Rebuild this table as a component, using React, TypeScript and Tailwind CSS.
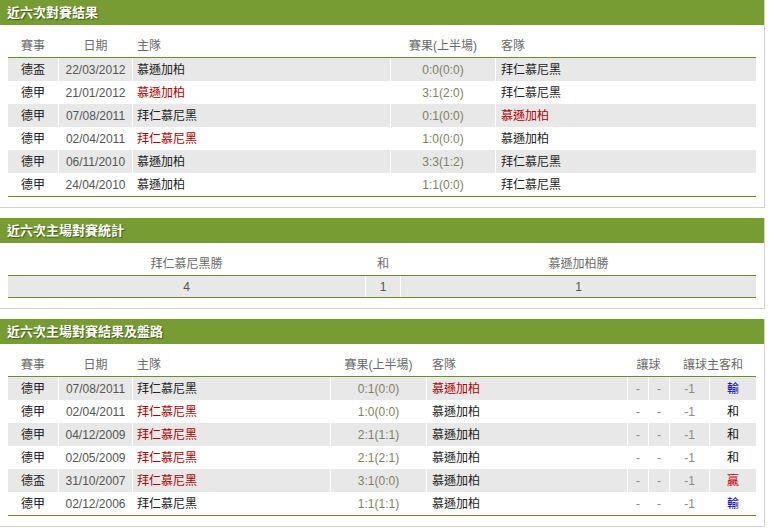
// 對賽往績 — 近六次對賽 / 主場統計 / 主場結果及盤路

const FONT = { fontFamily: '"Liberation Sans", Arial, "Noto Sans CJK TC", sans-serif' };

type Match = { league: string; date: string; home: string; homeRed?: boolean; score: string; away: string; awayRed?: boolean };

const recent: Match[] = [
  { league: "德盃", date: "22/03/2012", home: "慕遜加柏", score: "0:0(0:0)", away: "拜仁慕尼黑" },
  { league: "德甲", date: "21/01/2012", home: "慕遜加柏", homeRed: true, score: "3:1(2:0)", away: "拜仁慕尼黑" },
  { league: "德甲", date: "07/08/2011", home: "拜仁慕尼黑", score: "0:1(0:0)", away: "慕遜加柏", awayRed: true },
  { league: "德甲", date: "02/04/2011", home: "拜仁慕尼黑", homeRed: true, score: "1:0(0:0)", away: "慕遜加柏" },
  { league: "德甲", date: "06/11/2010", home: "慕遜加柏", score: "3:3(1:2)", away: "拜仁慕尼黑" },
  { league: "德甲", date: "24/04/2010", home: "慕遜加柏", score: "1:1(0:0)", away: "拜仁慕尼黑" },
];

type HomeMatch = Match & { result: "輸" | "和" | "贏" };

const homeRecent: HomeMatch[] = [
  { league: "德甲", date: "07/08/2011", home: "拜仁慕尼黑", score: "0:1(0:0)", away: "慕遜加柏", awayRed: true, result: "輸" },
  { league: "德甲", date: "02/04/2011", home: "拜仁慕尼黑", homeRed: true, score: "1:0(0:0)", away: "慕遜加柏", result: "和" },
  { league: "德甲", date: "04/12/2009", home: "拜仁慕尼黑", homeRed: true, score: "2:1(1:1)", away: "慕遜加柏", result: "和" },
  { league: "德甲", date: "02/05/2009", home: "拜仁慕尼黑", homeRed: true, score: "2:1(2:1)", away: "慕遜加柏", result: "和" },
  { league: "德盃", date: "31/10/2007", home: "拜仁慕尼黑", homeRed: true, score: "3:1(0:0)", away: "慕遜加柏", result: "贏" },
  { league: "德甲", date: "02/12/2006", home: "拜仁慕尼黑", score: "1:1(1:1)", away: "慕遜加柏", result: "輸" },
];

function Panel({ title, children }: { title: string; children: React.ReactNode }) {
  return (
    <div className="w-[765px] border-r border-b border-[#d2d2d2] bg-white">
      <div className="h-[25px] bg-[#779c33] flex items-center pl-[7px]">
        <span className="text-[13px] font-bold text-white [text-shadow:1px_1px_1px_#3f5a14]">{title}</span>
      </div>
      <div className="px-2 pt-[10px] pb-[10px]">{children}</div>
    </div>
  );
}

const teamCls = (red?: boolean) => (red ? "text-[#b00000]" : "text-[#222]");
const resultCls = { 輸: "text-[#0000b0]", 和: "text-[#111]", 贏: "text-[#c00000]" };

export default function App() {
  return (
    <div className="w-[769px] min-h-[529px] bg-white text-[12px] flex flex-col gap-[10px]" style={FONT}>
      {/* 近六次對賽結果 */}
      <Panel title="近六次對賽結果">
        <div className="grid grid-cols-[50px_73px_257px_104px_260px] gap-x-px h-[23px] items-center text-[#6a6a6a] border-b border-[#6b8e23]">
          <div className="text-center">賽事</div>
          <div className="text-center">日期</div>
          <div className="pl-1">主隊</div>
          <div className="text-center">賽果(上半場)</div>
          <div className="pl-[5px]">客隊</div>
        </div>
        <div className="border-b border-[#6b8e23]">
          {recent.map((m, i) => (
            <div key={i} className="grid grid-cols-[50px_73px_257px_104px_260px] gap-x-px h-[23px]">
              {[
                <span className="text-[#222]">{m.league}</span>,
                <span className="text-[#555]">{m.date}</span>,
                <span className={teamCls(m.homeRed)}>{m.home}</span>,
                <span className="text-[#7f7f68]">{m.score}</span>,
                <span className={teamCls(m.awayRed)}>{m.away}</span>,
              ].map((c, j) => (
                <div
                  key={j}
                  className={`flex items-center ${i % 2 === 0 ? "bg-[#e8e8e8]" : "bg-white"} ${
                    j === 2 ? "pl-1" : j === 4 ? "pl-[5px]" : "justify-center"
                  }`}
                >
                  {c}
                </div>
              ))}
            </div>
          ))}
        </div>
      </Panel>

      {/* 近六次主場對賽統計 */}
      <Panel title="近六次主場對賽統計">
        <div className="grid grid-cols-[357px_34px_355px] gap-x-px h-[23px] items-center text-[#6a6a6a] border-b border-[#6b8e23] text-center">
          <div>拜仁慕尼黑勝</div>
          <div>和</div>
          <div>慕遜加柏勝</div>
        </div>
        <div className="grid grid-cols-[357px_34px_355px] gap-x-px h-[22px] border-b border-[#6b8e23] text-[#555] text-center">
          <div className="bg-[#e8e8e8] flex items-center justify-center">4</div>
          <div className="bg-[#e8e8e8] flex items-center justify-center">1</div>
          <div className="bg-[#e8e8e8] flex items-center justify-center">1</div>
        </div>
      </Panel>

      {/* 近六次主場對賽結果及盤路 */}
      <Panel title="近六次主場對賽結果及盤路">
        <div className="grid grid-cols-[50px_73px_197px_95px_200px_20px_20px_39px_46px] gap-x-px h-[23px] items-center text-[#6a6a6a] border-b border-[#6b8e23]">
          <div className="text-center">賽事</div>
          <div className="text-center">日期</div>
          <div className="pl-1">主隊</div>
          <div className="text-center">賽果(上半場)</div>
          <div className="pl-[5px]">客隊</div>
          <div className="col-span-2 text-center">讓球</div>
          <div className="col-span-2 text-center">讓球主客和</div>
        </div>
        <div className="border-b border-[#6b8e23]">
          {homeRecent.map((m, i) => (
            <div key={i} className="grid grid-cols-[50px_73px_197px_95px_200px_20px_20px_39px_46px] gap-x-px h-[23px]">
              {[
                <span className="text-[#222]">{m.league}</span>,
                <span className="text-[#555]">{m.date}</span>,
                <span className={teamCls(m.homeRed)}>{m.home}</span>,
                <span className="text-[#7f7f68]">{m.score}</span>,
                <span className={teamCls(m.awayRed)}>{m.away}</span>,
                <span className="text-[#888]">-</span>,
                <span className="text-[#888]">-</span>,
                <span className="text-[#888]">-1</span>,
                <span className={resultCls[m.result]}>{m.result}</span>,
              ].map((c, j) => (
                <div
                  key={j}
                  className={`flex items-center ${i % 2 === 0 ? "bg-[#e8e8e8]" : "bg-white"} ${
                    j === 2 ? "pl-1" : j === 4 ? "pl-[5px]" : "justify-center"
                  }`}
                >
                  {c}
                </div>
              ))}
            </div>
          ))}
        </div>
      </Panel>
    </div>
  );
}
